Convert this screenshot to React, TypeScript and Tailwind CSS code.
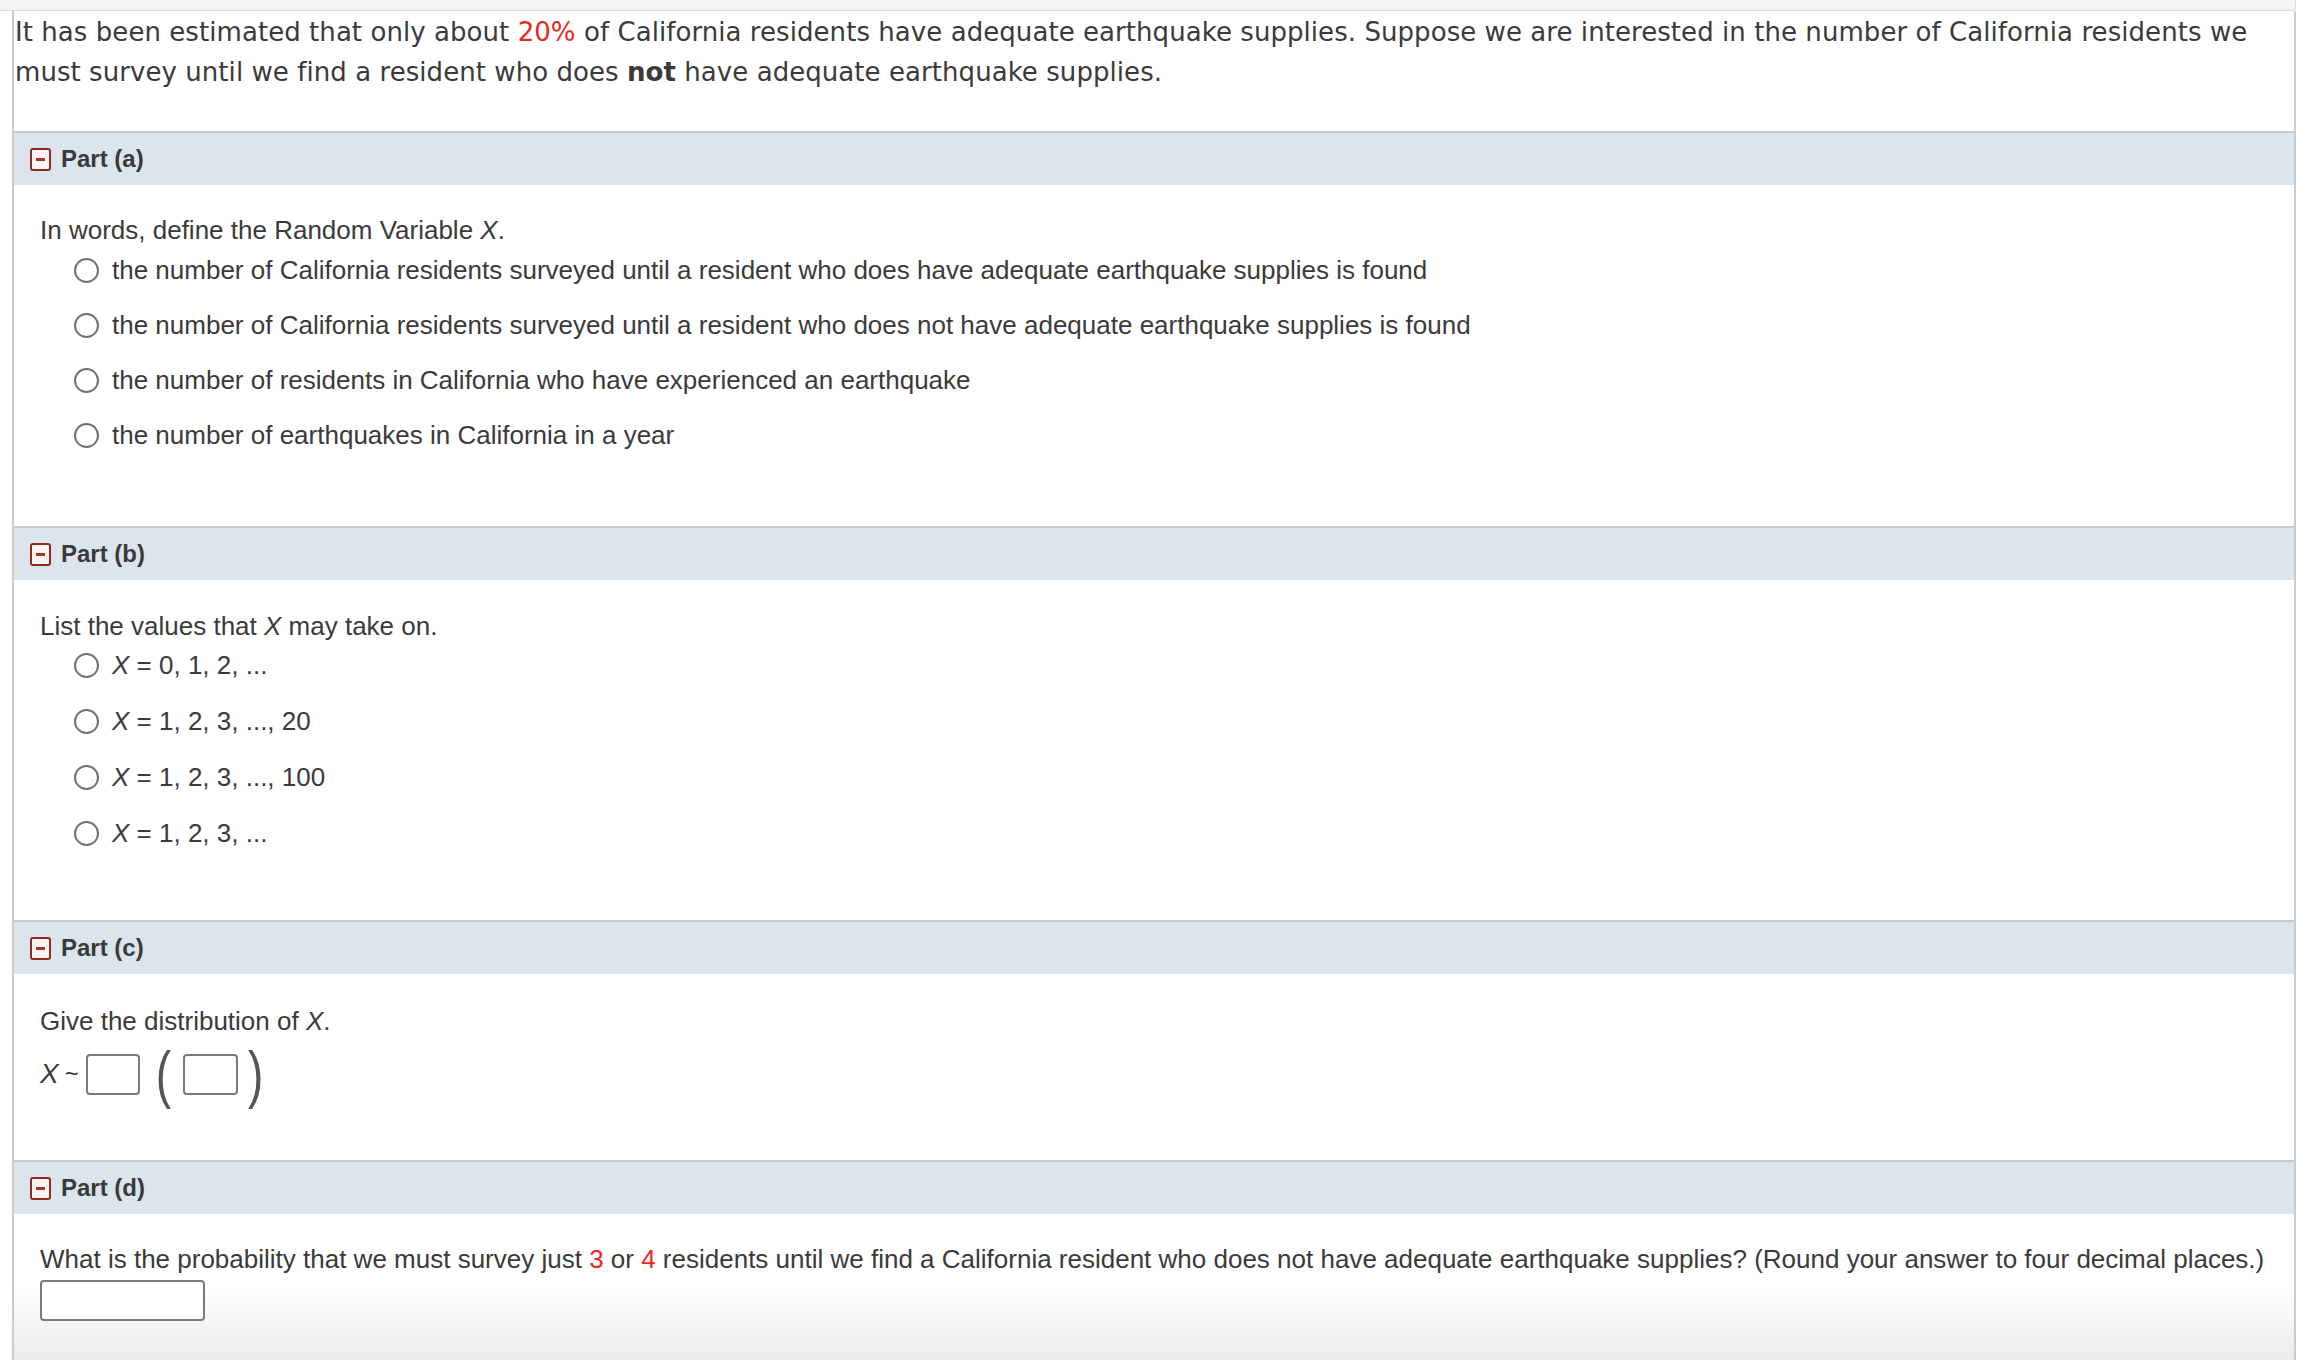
import React from "react";

const ink = "text-[#3a3a3a]";

function PartIcon() {
  return (
    <span className="flex h-[23px] w-[21px] items-center justify-center rounded-[3px] border-2 border-[#8e2a26] bg-[#fbf4f3]">
      <span className="h-[3px] w-[9px] bg-[#a8342e]" />
    </span>
  );
}

function PartHeader({ label }: { label: string }) {
  return (
    <div className="flex h-[54px] items-center gap-[10px] border-t-2 border-[#c9c9c9] bg-[#dce5ee] pl-[16px]">
      <PartIcon />
      <span className={`text-[24px] font-bold ${ink}`}>{label}</span>
    </div>
  );
}

function Radio({ children }: { children: React.ReactNode }) {
  return (
    <label className="flex h-[38px] items-center gap-[13px] pl-[34px]">
      <span className="h-[25px] w-[25px] shrink-0 rounded-full border-2 border-[#707070] bg-white" />
      <span className="whitespace-nowrap">{children}</span>
    </label>
  );
}

function Blank({ w }: { w: string }) {
  return <span className={`inline-block h-[41px] ${w} rounded-[4px] border-2 border-[#7a7a7a] bg-white`} />;
}

export default function App() {
  return (
    <div
      className={`flex min-h-[1360px] flex-col bg-white ${ink}`}
      style={{ fontFamily: '"Liberation Sans", Arial, sans-serif' }}
    >
      {/* strip of the question above */}
      <div className="h-[11px] w-[2296px] rounded-br-[4px] border-b border-r border-[#dadada] bg-[#f4f4f4]" />

      <div className="ml-[12px] flex w-[2284px] flex-1 flex-col border-x-2 border-[#cbcbcb]">
        {/* Intro */}
        <p
          className="pb-[39px] pl-[1px] pt-[1px] text-[26px] leading-[40px] tracking-[0.06px]"
          style={{ fontFamily: '"DejaVu Sans", Verdana, sans-serif' }}
        >
          It has been estimated that only about <span className="text-[#e8291d]">20%</span> of California
          residents have adequate earthquake supplies. Suppose we are interested in the number of California
          residents we must survey until we find a resident who does <b>not</b> have adequate earthquake
          supplies.
        </p>

        {/* Part (a) */}
        <PartHeader label="Part (a)" />
        <div className="pb-[72px] pl-[26px] pt-[30px] text-[26px]">
          <p className="leading-[30px]">
            In words, define the Random Variable <i>X</i>.
          </p>
          <div className="mt-[6px] flex flex-col gap-[17px]">
            <Radio>
              the number of California residents surveyed until a resident who does have adequate earthquake
              supplies is found
            </Radio>
            <Radio>
              the number of California residents surveyed until a resident who does not have adequate
              earthquake supplies is found
            </Radio>
            <Radio>the number of residents in California who have experienced an earthquake</Radio>
            <Radio>the number of earthquakes in California in a year</Radio>
          </div>
        </div>

        {/* Part (b) */}
        <PartHeader label="Part (b)" />
        <div className="pb-[68px] pl-[26px] pt-[31px] text-[26px]">
          <p className="leading-[30px]">
            List the values that <i>X</i> may take on.
          </p>
          <div className="mt-[5px] flex flex-col gap-[18px]">
            <Radio>
              <i>X</i> = 0, 1, 2, ...
            </Radio>
            <Radio>
              <i>X</i> = 1, 2, 3, ..., 20
            </Radio>
            <Radio>
              <i>X</i> = 1, 2, 3, ..., 100
            </Radio>
            <Radio>
              <i>X</i> = 1, 2, 3, ...
            </Radio>
          </div>
        </div>

        {/* Part (c) */}
        <PartHeader label="Part (c)" />
        <div className="pb-[56px] pl-[26px] pt-[32px] text-[26px]">
          <p className="leading-[30px]">
            Give the distribution of <i>X</i>.
          </p>
          <div className="mt-[8px] flex h-[60px] items-center">
            <i className="text-[28px]">X</i>
            <span className="ml-[6px] mr-[7px] text-[24px]">~</span>
            <Blank w="w-[54px]" />
            <span className="ml-[16px] mr-[12px] inline-block origin-center scale-y-[1.35] text-[46px] font-light leading-none text-[#555]">
              (
            </span>
            <Blank w="w-[55px]" />
            <span className="ml-[10px] inline-block origin-center scale-y-[1.35] text-[46px] font-light leading-none text-[#555]">
              )
            </span>
          </div>
        </div>

        {/* Part (d) */}
        <PartHeader label="Part (d)" />
        <div className="flex-1 bg-gradient-to-b from-white from-[50%] to-[#ebebeb] pl-[26px] pt-[30px] text-[26px]">
          <p className="leading-[30px]">
            What is the probability that we must survey just <span className="text-[#e8291d]">3</span> or{" "}
            <span className="text-[#e8291d]">4</span> residents until we find a California resident who does
            not have adequate earthquake supplies? (Round your answer to four decimal places.)
          </p>
          <div className="mt-[6px]">
            <span className="inline-block h-[41px] w-[165px] rounded-[4px] border-2 border-[#7a7a7a] bg-white" />
          </div>
        </div>
      </div>
    </div>
  );
}
